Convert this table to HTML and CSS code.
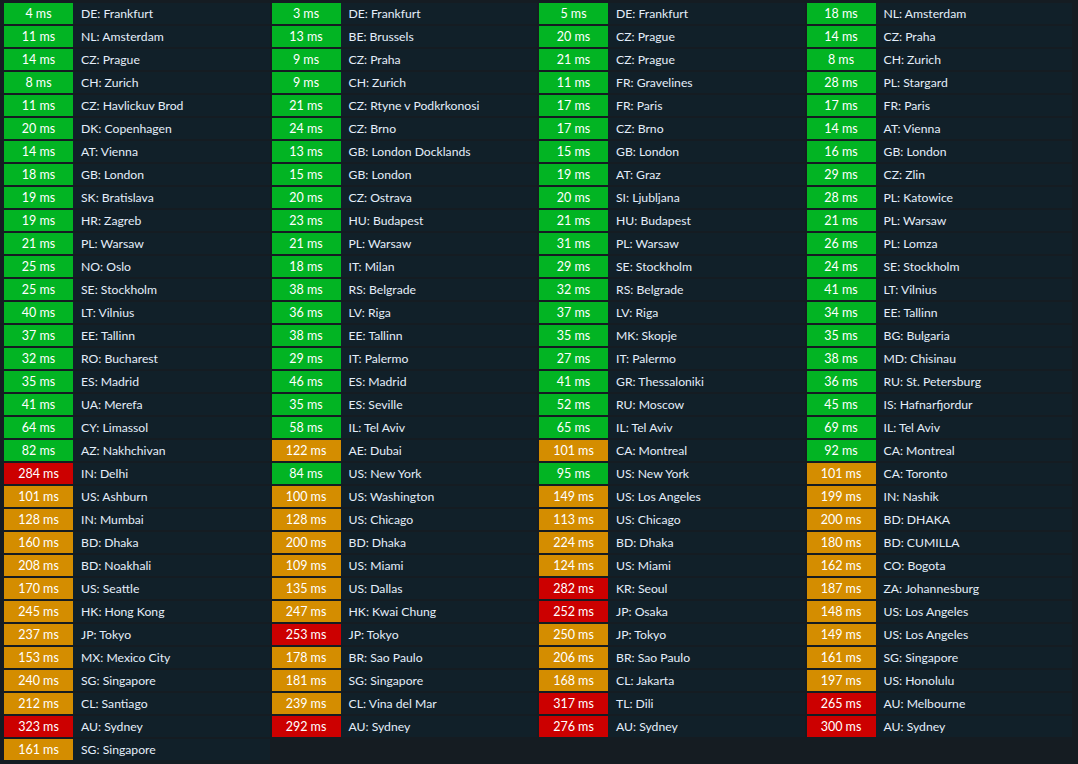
FILE: index.html
```html
<!DOCTYPE html>
<html>
<head>
<meta charset="utf-8">
<link rel="stylesheet" href="styles.css">
</head>
<body>
<div class="board">
  <div class="col">
    <div class="row"><span class="ms g">4 ms</span><span class="loc">DE: Frankfurt</span></div>
    <div class="row"><span class="ms g">11 ms</span><span class="loc">NL: Amsterdam</span></div>
    <div class="row"><span class="ms g">14 ms</span><span class="loc">CZ: Prague</span></div>
    <div class="row"><span class="ms g">8 ms</span><span class="loc">CH: Zurich</span></div>
    <div class="row"><span class="ms g">11 ms</span><span class="loc">CZ: Havlickuv Brod</span></div>
    <div class="row"><span class="ms g">20 ms</span><span class="loc">DK: Copenhagen</span></div>
    <div class="row"><span class="ms g">14 ms</span><span class="loc">AT: Vienna</span></div>
    <div class="row"><span class="ms g">18 ms</span><span class="loc">GB: London</span></div>
    <div class="row"><span class="ms g">19 ms</span><span class="loc">SK: Bratislava</span></div>
    <div class="row"><span class="ms g">19 ms</span><span class="loc">HR: Zagreb</span></div>
    <div class="row"><span class="ms g">21 ms</span><span class="loc">PL: Warsaw</span></div>
    <div class="row"><span class="ms g">25 ms</span><span class="loc">NO: Oslo</span></div>
    <div class="row"><span class="ms g">25 ms</span><span class="loc">SE: Stockholm</span></div>
    <div class="row"><span class="ms g">40 ms</span><span class="loc">LT: Vilnius</span></div>
    <div class="row"><span class="ms g">37 ms</span><span class="loc">EE: Tallinn</span></div>
    <div class="row"><span class="ms g">32 ms</span><span class="loc">RO: Bucharest</span></div>
    <div class="row"><span class="ms g">35 ms</span><span class="loc">ES: Madrid</span></div>
    <div class="row"><span class="ms g">41 ms</span><span class="loc">UA: Merefa</span></div>
    <div class="row"><span class="ms g">64 ms</span><span class="loc">CY: Limassol</span></div>
    <div class="row"><span class="ms g">82 ms</span><span class="loc">AZ: Nakhchivan</span></div>
    <div class="row"><span class="ms r">284 ms</span><span class="loc">IN: Delhi</span></div>
    <div class="row"><span class="ms o">101 ms</span><span class="loc">US: Ashburn</span></div>
    <div class="row"><span class="ms o">128 ms</span><span class="loc">IN: Mumbai</span></div>
    <div class="row"><span class="ms o">160 ms</span><span class="loc">BD: Dhaka</span></div>
    <div class="row"><span class="ms o">208 ms</span><span class="loc">BD: Noakhali</span></div>
    <div class="row"><span class="ms o">170 ms</span><span class="loc">US: Seattle</span></div>
    <div class="row"><span class="ms o">245 ms</span><span class="loc">HK: Hong Kong</span></div>
    <div class="row"><span class="ms o">237 ms</span><span class="loc">JP: Tokyo</span></div>
    <div class="row"><span class="ms o">153 ms</span><span class="loc">MX: Mexico City</span></div>
    <div class="row"><span class="ms o">240 ms</span><span class="loc">SG: Singapore</span></div>
    <div class="row"><span class="ms o">212 ms</span><span class="loc">CL: Santiago</span></div>
    <div class="row"><span class="ms r">323 ms</span><span class="loc">AU: Sydney</span></div>
    <div class="row"><span class="ms o">161 ms</span><span class="loc">SG: Singapore</span></div>
  </div>
  <div class="col">
    <div class="row"><span class="ms g">3 ms</span><span class="loc">DE: Frankfurt</span></div>
    <div class="row"><span class="ms g">13 ms</span><span class="loc">BE: Brussels</span></div>
    <div class="row"><span class="ms g">9 ms</span><span class="loc">CZ: Praha</span></div>
    <div class="row"><span class="ms g">9 ms</span><span class="loc">CH: Zurich</span></div>
    <div class="row"><span class="ms g">21 ms</span><span class="loc">CZ: Rtyne v Podkrkonosi</span></div>
    <div class="row"><span class="ms g">24 ms</span><span class="loc">CZ: Brno</span></div>
    <div class="row"><span class="ms g">13 ms</span><span class="loc">GB: London Docklands</span></div>
    <div class="row"><span class="ms g">15 ms</span><span class="loc">GB: London</span></div>
    <div class="row"><span class="ms g">20 ms</span><span class="loc">CZ: Ostrava</span></div>
    <div class="row"><span class="ms g">23 ms</span><span class="loc">HU: Budapest</span></div>
    <div class="row"><span class="ms g">21 ms</span><span class="loc">PL: Warsaw</span></div>
    <div class="row"><span class="ms g">18 ms</span><span class="loc">IT: Milan</span></div>
    <div class="row"><span class="ms g">38 ms</span><span class="loc">RS: Belgrade</span></div>
    <div class="row"><span class="ms g">36 ms</span><span class="loc">LV: Riga</span></div>
    <div class="row"><span class="ms g">38 ms</span><span class="loc">EE: Tallinn</span></div>
    <div class="row"><span class="ms g">29 ms</span><span class="loc">IT: Palermo</span></div>
    <div class="row"><span class="ms g">46 ms</span><span class="loc">ES: Madrid</span></div>
    <div class="row"><span class="ms g">35 ms</span><span class="loc">ES: Seville</span></div>
    <div class="row"><span class="ms g">58 ms</span><span class="loc">IL: Tel Aviv</span></div>
    <div class="row"><span class="ms o">122 ms</span><span class="loc">AE: Dubai</span></div>
    <div class="row"><span class="ms g">84 ms</span><span class="loc">US: New York</span></div>
    <div class="row"><span class="ms o">100 ms</span><span class="loc">US: Washington</span></div>
    <div class="row"><span class="ms o">128 ms</span><span class="loc">US: Chicago</span></div>
    <div class="row"><span class="ms o">200 ms</span><span class="loc">BD: Dhaka</span></div>
    <div class="row"><span class="ms o">109 ms</span><span class="loc">US: Miami</span></div>
    <div class="row"><span class="ms o">135 ms</span><span class="loc">US: Dallas</span></div>
    <div class="row"><span class="ms o">247 ms</span><span class="loc">HK: Kwai Chung</span></div>
    <div class="row"><span class="ms r">253 ms</span><span class="loc">JP: Tokyo</span></div>
    <div class="row"><span class="ms o">178 ms</span><span class="loc">BR: Sao Paulo</span></div>
    <div class="row"><span class="ms o">181 ms</span><span class="loc">SG: Singapore</span></div>
    <div class="row"><span class="ms o">239 ms</span><span class="loc">CL: Vina del Mar</span></div>
    <div class="row"><span class="ms r">292 ms</span><span class="loc">AU: Sydney</span></div>
  </div>
  <div class="col">
    <div class="row"><span class="ms g">5 ms</span><span class="loc">DE: Frankfurt</span></div>
    <div class="row"><span class="ms g">20 ms</span><span class="loc">CZ: Prague</span></div>
    <div class="row"><span class="ms g">21 ms</span><span class="loc">CZ: Prague</span></div>
    <div class="row"><span class="ms g">11 ms</span><span class="loc">FR: Gravelines</span></div>
    <div class="row"><span class="ms g">17 ms</span><span class="loc">FR: Paris</span></div>
    <div class="row"><span class="ms g">17 ms</span><span class="loc">CZ: Brno</span></div>
    <div class="row"><span class="ms g">15 ms</span><span class="loc">GB: London</span></div>
    <div class="row"><span class="ms g">19 ms</span><span class="loc">AT: Graz</span></div>
    <div class="row"><span class="ms g">20 ms</span><span class="loc">SI: Ljubljana</span></div>
    <div class="row"><span class="ms g">21 ms</span><span class="loc">HU: Budapest</span></div>
    <div class="row"><span class="ms g">31 ms</span><span class="loc">PL: Warsaw</span></div>
    <div class="row"><span class="ms g">29 ms</span><span class="loc">SE: Stockholm</span></div>
    <div class="row"><span class="ms g">32 ms</span><span class="loc">RS: Belgrade</span></div>
    <div class="row"><span class="ms g">37 ms</span><span class="loc">LV: Riga</span></div>
    <div class="row"><span class="ms g">35 ms</span><span class="loc">MK: Skopje</span></div>
    <div class="row"><span class="ms g">27 ms</span><span class="loc">IT: Palermo</span></div>
    <div class="row"><span class="ms g">41 ms</span><span class="loc">GR: Thessaloniki</span></div>
    <div class="row"><span class="ms g">52 ms</span><span class="loc">RU: Moscow</span></div>
    <div class="row"><span class="ms g">65 ms</span><span class="loc">IL: Tel Aviv</span></div>
    <div class="row"><span class="ms o">101 ms</span><span class="loc">CA: Montreal</span></div>
    <div class="row"><span class="ms g">95 ms</span><span class="loc">US: New York</span></div>
    <div class="row"><span class="ms o">149 ms</span><span class="loc">US: Los Angeles</span></div>
    <div class="row"><span class="ms o">113 ms</span><span class="loc">US: Chicago</span></div>
    <div class="row"><span class="ms o">224 ms</span><span class="loc">BD: Dhaka</span></div>
    <div class="row"><span class="ms o">124 ms</span><span class="loc">US: Miami</span></div>
    <div class="row"><span class="ms r">282 ms</span><span class="loc">KR: Seoul</span></div>
    <div class="row"><span class="ms r">252 ms</span><span class="loc">JP: Osaka</span></div>
    <div class="row"><span class="ms o">250 ms</span><span class="loc">JP: Tokyo</span></div>
    <div class="row"><span class="ms o">206 ms</span><span class="loc">BR: Sao Paulo</span></div>
    <div class="row"><span class="ms o">168 ms</span><span class="loc">CL: Jakarta</span></div>
    <div class="row"><span class="ms r">317 ms</span><span class="loc">TL: Dili</span></div>
    <div class="row"><span class="ms r">276 ms</span><span class="loc">AU: Sydney</span></div>
  </div>
  <div class="col">
    <div class="row"><span class="ms g">18 ms</span><span class="loc">NL: Amsterdam</span></div>
    <div class="row"><span class="ms g">14 ms</span><span class="loc">CZ: Praha</span></div>
    <div class="row"><span class="ms g">8 ms</span><span class="loc">CH: Zurich</span></div>
    <div class="row"><span class="ms g">28 ms</span><span class="loc">PL: Stargard</span></div>
    <div class="row"><span class="ms g">17 ms</span><span class="loc">FR: Paris</span></div>
    <div class="row"><span class="ms g">14 ms</span><span class="loc">AT: Vienna</span></div>
    <div class="row"><span class="ms g">16 ms</span><span class="loc">GB: London</span></div>
    <div class="row"><span class="ms g">29 ms</span><span class="loc">CZ: Zlin</span></div>
    <div class="row"><span class="ms g">28 ms</span><span class="loc">PL: Katowice</span></div>
    <div class="row"><span class="ms g">21 ms</span><span class="loc">PL: Warsaw</span></div>
    <div class="row"><span class="ms g">26 ms</span><span class="loc">PL: Lomza</span></div>
    <div class="row"><span class="ms g">24 ms</span><span class="loc">SE: Stockholm</span></div>
    <div class="row"><span class="ms g">41 ms</span><span class="loc">LT: Vilnius</span></div>
    <div class="row"><span class="ms g">34 ms</span><span class="loc">EE: Tallinn</span></div>
    <div class="row"><span class="ms g">35 ms</span><span class="loc">BG: Bulgaria</span></div>
    <div class="row"><span class="ms g">38 ms</span><span class="loc">MD: Chisinau</span></div>
    <div class="row"><span class="ms g">36 ms</span><span class="loc">RU: St. Petersburg</span></div>
    <div class="row"><span class="ms g">45 ms</span><span class="loc">IS: Hafnarfjordur</span></div>
    <div class="row"><span class="ms g">69 ms</span><span class="loc">IL: Tel Aviv</span></div>
    <div class="row"><span class="ms g">92 ms</span><span class="loc">CA: Montreal</span></div>
    <div class="row"><span class="ms o">101 ms</span><span class="loc">CA: Toronto</span></div>
    <div class="row"><span class="ms o">199 ms</span><span class="loc">IN: Nashik</span></div>
    <div class="row"><span class="ms o">200 ms</span><span class="loc">BD: DHAKA</span></div>
    <div class="row"><span class="ms o">180 ms</span><span class="loc">BD: CUMILLA</span></div>
    <div class="row"><span class="ms o">162 ms</span><span class="loc">CO: Bogota</span></div>
    <div class="row"><span class="ms o">187 ms</span><span class="loc">ZA: Johannesburg</span></div>
    <div class="row"><span class="ms o">148 ms</span><span class="loc">US: Los Angeles</span></div>
    <div class="row"><span class="ms o">149 ms</span><span class="loc">US: Los Angeles</span></div>
    <div class="row"><span class="ms o">161 ms</span><span class="loc">SG: Singapore</span></div>
    <div class="row"><span class="ms o">197 ms</span><span class="loc">US: Honolulu</span></div>
    <div class="row"><span class="ms r">265 ms</span><span class="loc">AU: Melbourne</span></div>
    <div class="row"><span class="ms r">300 ms</span><span class="loc">AU: Sydney</span></div>
  </div>
</div>
</body>
</html>
```
FILE: styles.css
```css
html, body {
  margin: 0;
  padding: 0;
  background: #151c22;
}
body {
  font-family: Lato, "Open Sans", sans-serif;
  font-size: 12.2px;
  color: #e4eefa;
}
.board {
  display: grid;
  grid-template-columns: repeat(4, 1fr);
  column-gap: 2px;
  padding: 3px 6px 0 4px;
}
.col {
  display: flex;
  flex-direction: column;
  row-gap: 2px;
}
.row {
  display: flex;
  height: 21px;
  background: #112029;
  align-items: stretch;
}
.ms {
  flex: 0 0 69px;
  display: flex;
  align-items: center;
  justify-content: center;
  color: #ffffff;
  font-size: 12.5px;
}
.loc {
  display: flex;
  align-items: center;
  padding-left: 8px;
  white-space: nowrap;
}
.g { background: #02b423; }
.o { background: #d48d00; }
.r { background: #cc0000; }
```
